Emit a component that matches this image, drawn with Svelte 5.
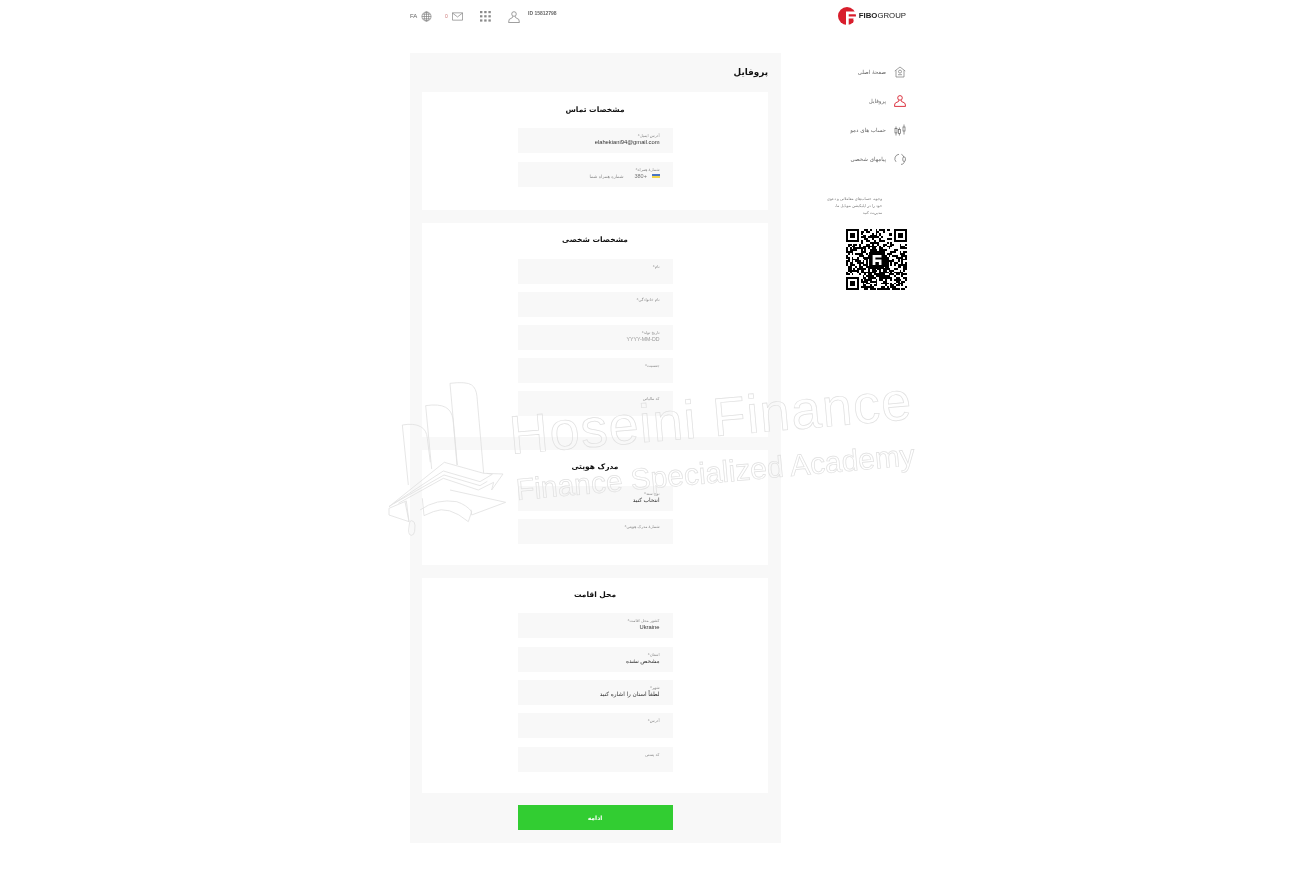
<script>
  const menu = [
    { name: 'صفحهٔ اصلی', icon: 'home' },
    { name: 'پروفایل', icon: 'user' },
    { name: 'حساب های دمو', icon: 'candles' },
    { name: 'پیامهای شخصی', icon: 'headset' }
  ];

  const sections = [
    {
      title: 'مشخصات شخصی',
      fields: [
        { label: 'نام*' },
        { label: 'نام خانوادگی*' },
        { label: 'تاریخ تولد*', value: 'YYYY-MM-DD', muted: true },
        { label: 'جنسیت*' },
        { label: 'کد مالیاتی' }
      ]
    },
    {
      title: 'مدرک هویتی',
      fields: [
        { label: 'نوع سند*', value: 'انتخاب کنید' },
        { label: 'شمارهٔ مدرک هویتی*' }
      ]
    },
    {
      title: 'محل اقامت',
      wide: true,
      fields: [
        { label: 'کشور محل اقامت*', value: 'Ukraine' },
        { label: 'استان*', value: 'مشخص نشده' },
        { label: 'شهر*', value: 'لطفاً استان را اشاره کنید' },
        { label: 'آدرس*' },
        { label: 'کد پستی' }
      ]
    }
  ];

  // pseudo random modules for the qr code
  const size = 33;
  let qr = [];
  let seed = 91;
  function inFinder(x, y) {
    return (x < 8 && y < 8) || (x >= size - 8 && y < 8) || (x < 8 && y >= size - 8);
  }
  for (let y = 0; y < size; y++) {
    for (let x = 0; x < size; x++) {
      seed = (seed * 1103515245 + 12345) & 0x7fffffff;
      if (!inFinder(x, y) && (seed >> 16) % 100 < 56) qr.push({ x, y });
    }
  }
</script>

<div class="page">
  <header class="top">
    <div class="tools">
      <span class="lang">FA</span>
      <svg class="ic globe" viewBox="0 0 12 12" fill="none" stroke="#777" stroke-width=".7">
        <circle cx="6" cy="6" r="5" />
        <ellipse cx="6" cy="6" rx="2.4" ry="5" />
        <path d="M6 1v10M1 6h10M1.7 3.5h8.6M1.7 8.5h8.6" />
      </svg>
      <span class="count">0</span>
      <svg class="ic mail" viewBox="0 0 12 9" fill="none" stroke="#777" stroke-width=".7">
        <path d="M.5.5h11v8H.5zM.5.7 6 5l5.5-4.3" />
      </svg>
      <svg class="ic apps" viewBox="0 0 11 11" fill="#8a8a8a">
        <rect x="0" y="0" width="2.4" height="2.2" /><rect x="4.2" y="0" width="2.4" height="2.2" /><rect x="8.4" y="0" width="2.4" height="2.2" />
        <rect x="0" y="4.2" width="2.4" height="2.2" /><rect x="4.2" y="4.2" width="2.4" height="2.2" /><rect x="8.4" y="4.2" width="2.4" height="2.2" />
        <rect x="0" y="8.4" width="2.4" height="2.2" /><rect x="4.2" y="8.4" width="2.4" height="2.2" /><rect x="8.4" y="8.4" width="2.4" height="2.2" />
      </svg>
      <svg class="ic person" viewBox="0 0 12 12" fill="none" stroke="#777" stroke-width=".7">
        <circle cx="6" cy="3" r="2.3" />
        <path d="M4.8 5.2 4.4 6.6 1.2 8.4.6 11.5h10.8l-.6-3.1-3.2-1.8-.4-1.4" />
      </svg>
      <span class="id">ID 15812798</span>
    </div>
    <div class="logo">
      <svg viewBox="0 0 18 18" width="18" height="18">
        <circle cx="9" cy="9" r="9" fill="#d81e2c" />
        <path d="M8 4.6h10v2.6h-7.3v2.3H18V13h-2.4v-1.4h-4.9V18H8z" fill="#fff" />
        <path d="M15.6 11.6H18V16l-2.4 2z" fill="#fff" />
      </svg>
      <span class="brand"><b>FIBO</b>GROUP</span>
    </div>
  </header>

  <div class="layout">
    <main class="panel" dir="rtl">
      <h1>پروفایل</h1>

      <section class="card first">
        <h2>مشخصات تماس</h2>
        <div class="field">
          <span class="label">آدرس ایمیل*</span>
          <span class="value">elahekiani94@gmail.com</span>
        </div>
        <div class="field">
          <span class="label">شمارهٔ همراه*</span>
          <div class="phone">
            <span class="flag"></span>
            <span class="prefix">380+</span>
            <span class="hint">شماره همراه شما</span>
          </div>
        </div>
      </section>

      {#each sections as section}
        <section class="card" class:wide={section.wide}>
          <h2>{section.title}</h2>
          {#each section.fields as field}
            <div class="field">
              <span class="label">{field.label}</span>
              {#if field.value}
                <span class="value" class:muted={field.muted}>{field.value}</span>
              {/if}
            </div>
          {/each}
        </section>
      {/each}

      <button class="next">ادامه</button>
    </main>

    <aside class="side" dir="rtl">
      <nav>
        {#each menu as item}
          <div class="item" class:active={item.icon === 'user'}>
            <span class="glyph">
              {#if item.icon === 'home'}
                <svg viewBox="0 0 12 12" fill="none" stroke="#777" stroke-width=".7">
                  <path d="M.8 5 6 1l5.2 4M2 4.4V11h8V4.4" /><circle cx="6" cy="5.6" r="1.5" /><path d="M4 8.7h4" />
                </svg>
              {:else if item.icon === 'user'}
                <svg viewBox="0 0 12 12" fill="none" stroke="#d81e2c" stroke-width=".9">
                  <circle cx="6" cy="2.9" r="2.3" />
                  <path d="M4.8 5.2 4.4 6.6 1.6 7.8Q.6 8.4.5 11.4h11Q11.4 8.4 10.4 7.8L7.6 6.6 7.2 5.2" />
                </svg>
              {:else if item.icon === 'candles'}
                <svg viewBox="0 0 12 12" fill="none" stroke="#666" stroke-width=".7">
                  <path d="M2 2.5v9M5.4 3.5v8M10 .5v10" /><rect x="1" y="4.5" width="2" height="4.4" fill="#fff" /><rect x="4.4" y="5.5" width="2" height="4" fill="#fff" /><rect x="9" y="3" width="2" height="4" fill="#fff" />
                </svg>
              {:else}
                <svg viewBox="0 0 12 12" fill="none" stroke="#666" stroke-width=".7">
                  <path d="M5 1.3A4.5 4.5 0 0 0 2 8.8M7.4 1.3a4.5 4.5 0 0 1 2.4 2.7M10.3 8.4c0 1.8-1.3 3-3.3 3" />
                  <rect x="8.8" y="4" width="2.6" height="4.4" rx="1.2" />
                </svg>
              {/if}
            </span>
            <span>{item.name}</span>
          </div>
        {/each}
      </nav>

      <p class="note">وجوه، حساب‌های معاملاتی و دعوی<br />خود را در اپلیکیشن موبایل ما،<br />مدیریت کنید</p>

      <svg class="qr" viewBox="0 0 33 33" dir="ltr" shape-rendering="crispEdges">
        {#each qr as m}
          <rect x={m.x} y={m.y} width="1" height="1" />
        {/each}
        <path fill-rule="evenodd" d="M0 0h7v7H0zM1 1v5h5V1z M26 0h7v7h-7zM27 1v5h5V1z M0 26h7v7H0zM1 27v5h5v-5z" />
        <path d="M2 2h3v3H2zM28 2h3v3h-3zM2 28h3v3H2z" />
        <rect x="12.3" y="12" width="8.6" height="9.4" rx="1" />
        <path d="M14.4 14h4.8v1.4h-3.3v1.1h3.3v3h-1.4v-1.6h-1.9v1.6h-1.5z" fill="#fff" shape-rendering="auto" />
      </svg>
    </aside>
  </div>

  <svg class="mark" viewBox="0 0 560 180" width="560" height="180" fill="none" stroke="#e0e0e0" stroke-width=".7">
    <g transform="translate(5 5) scale(.3333)" stroke-width="2.4">
      <path d="M195 25q50-6 65 5 14 10 16 35l20 230M195 25l22 245" />
      <path d="M122 92q40-6 60 5 18 10 22 35l12 138M122 92l18 190" />
      <path d="M52 150q35-6 55 5 18 10 20 35l9 72M52 150l18 180" />
      <path d="M12 395 178 262l118 33 58 2-34 48 6-23-46 23-105-35L40 385" />
      <path d="M12 395 175 288l110 32 37-22-17-3" />
      <path d="M26 386 177 300l108 32 22-13" />
      <path d="M12 400l52-22 8 62-60-20zM195 345l167 37-102 38-2-16" />
      <path d="M105 405q50-35 110-25 30 10 45 30l-10 30q-60-50-105-30l-28 12-5-52" />
      <path d="M60 380l12 60M80 437q10 2 10 14l-1 18q-2 12-10 12t-8-16l2-18q0-10 7-10z" />
    </g>
    <text class="wm big" transform="translate(131 84) rotate(-5)" textLength="403" lengthAdjust="spacing">Hoseini Finance</text>
    <text class="wm small" transform="translate(137 130) rotate(-5)" textLength="400" lengthAdjust="spacing">Finance Specialized Academy</text>
  </svg>
</div>

<style>
  :global(body) {
    margin: 0;
    background: #fff;
    font-family: "DejaVu Sans", "Liberation Sans", sans-serif;
  }
  .page {
    position: relative;
    width: 497px;
    height: 882px;
    margin-left: 410px;
    will-change: transform;
  }
  .top {
    display: flex;
    justify-content: space-between;
    height: 53px;
  }
  .tools {
    display: flex;
    align-items: center;
    height: 32px;
    color: #666;
    font-family: "Liberation Sans", sans-serif;
  }
  .lang {
    font-size: 6px;
    width: 11px;
  }
  .ic {
    display: block;
  }
  .globe {
    width: 11px;
    height: 11px;
  }
  .count {
    margin-left: 13px;
    font-size: 5px;
    color: #c77;
    width: 7px;
  }
  .mail {
    width: 11px;
    height: 9px;
  }
  .apps {
    margin-left: 17px;
    width: 11px;
    height: 11px;
  }
  .person {
    margin-left: 17px;
    width: 12px;
    height: 12px;
    margin-top: 1px;
  }
  .id {
    margin-left: 8px;
    font-size: 5px;
    font-weight: 700;
    margin-top: -6px;
  }
  .logo {
    display: flex;
    align-items: center;
    gap: 3px;
    height: 31px;
    margin-right: 1px;
  }
  .brand {
    font-family: "Liberation Sans", sans-serif;
    font-size: 7.8px;
    color: #222;
  }
  .layout {
    display: flex;
    align-items: flex-start;
  }
  .panel {
    box-sizing: border-box;
    width: 371px;
    height: 790px;
    padding: 0 13px 0 12px;
    background: #f8f8f8;
  }
  h1 {
    margin: 0;
    height: 39px;
    line-height: 39px;
    font-size: 8.8px;
    font-weight: 700;
    color: #111;
  }
  .card {
    display: flex;
    flex-direction: column;
    align-items: center;
    gap: 8px;
    margin-bottom: 13px;
    padding-bottom: 21px;
    background: #fff;
  }
  .card.first {
    gap: 9px;
    padding-bottom: 23px;
  }
  .card.wide {
    gap: 8.35px;
    margin-bottom: 12px;
    padding-bottom: 21.4px;
  }
  h2 {
    margin: 0 0 -8px;
    height: 36px;
    line-height: 34px;
    font-size: 7.5px;
    font-weight: 700;
    color: #111;
  }
  .card.first h2 {
    margin-bottom: -9px;
    line-height: 35px;
  }
  .card.wide h2 {
    margin-bottom: -9.15px;
    line-height: 33px;
  }
  .field {
    box-sizing: border-box;
    display: flex;
    flex-direction: column;
    width: 155px;
    height: 25px;
    padding: 5px 13px 0;
    background: #f8f8f8;
  }
  .label {
    font-size: 4px;
    line-height: 5px;
    color: #888;
  }
  .value {
    font-family: "Liberation Sans", "DejaVu Sans", sans-serif;
    font-size: 5.8px;
    line-height: 8px;
    color: #333;
  }
  .value.muted {
    font-size: 5.2px;
    color: #999;
  }
  .phone {
    display: flex;
    align-items: center;
    height: 8px;
    font-size: 4.5px;
    color: #777;
  }
  .flag {
    width: 8px;
    height: 4px;
    background: linear-gradient(#4a76c4 50%, #f2d64b 50%);
  }
  .prefix {
    margin-right: 4px;
    font-family: "Liberation Sans", sans-serif;
    font-size: 5.5px;
    direction: ltr;
    width: 13px;
  }
  .hint {
    margin-right: 11px;
    color: #888;
  }
  .next {
    display: block;
    width: 155px;
    height: 25px;
    margin: 0 auto;
    padding: 0;
    border: 0;
    background: #32cd32;
    color: #fff;
    font-family: inherit;
    font-size: 6px;
    font-weight: 700;
  }
  .side {
    box-sizing: border-box;
    width: 126px;
    padding-top: 13px;
  }
  nav {
    display: flex;
    flex-direction: column;
    gap: 17px;
    margin-right: 1px;
  }
  .item {
    display: flex;
    align-items: center;
    gap: 8px;
    height: 12px;
    font-size: 5.5px;
    color: #666;
  }
  .glyph {
    width: 12px;
    height: 12px;
  }
  .glyph svg {
    display: block;
    width: 12px;
    height: 12px;
  }
  .note {
    margin: 30px 25px 0 0;
    white-space: nowrap;
    font-size: 3.8px;
    line-height: 7.2px;
    color: #777;
  }
  .qr {
    display: block;
    width: 61px;
    height: 61px;
    margin-top: 12px;
    background: #fff;
  }
  .mark {
    position: absolute;
    left: -30px;
    top: 370px;
    overflow: visible;
    pointer-events: none;
  }
  .wm {
    font-family: "Liberation Sans", sans-serif;
  }
  .big {
    font-size: 54px;
  }
  .small {
    font-size: 30px;
  }
</style>
